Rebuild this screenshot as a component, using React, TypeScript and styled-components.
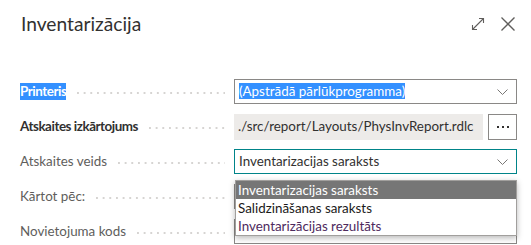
import styled, { createGlobalStyle } from 'styled-components';

const GlobalStyle = createGlobalStyle`
  html, body {
    margin: 0;
    padding: 0;
    background: #ffffff;
  }
  body {
    font-family: Lato, "Liberation Sans", sans-serif;
    color: #323130;
  }
`;

const Dialog = styled.div`
  width: 531px;
  height: 245px;
  padding: 12px 14px 0 20px;
  box-sizing: border-box;
  overflow: hidden;
`;

const Header = styled.div`
  display: flex;
  align-items: center;
  height: 24px;
  margin-bottom: 38px;
`;

const Title = styled.h1`
  flex: 1;
  margin: 0 0 0 1px;
  font-size: 19.2px;
  line-height: 24px;
  font-weight: 400;
  color: #323130;
`;

const HeaderActions = styled.div`
  display: flex;
  align-items: center;
  gap: 16px;
  margin-right: 2px;
`;

const IconButton = styled.span`
  display: flex;
  width: 14px;
  height: 14px;
  color: #605e5c;
`;

const Form = styled.div`
  display: flex;
  flex-direction: column;
`;

const Row = styled.div`
  display: grid;
  grid-template-columns: 205px 283px;
  column-gap: 9px;
  align-items: center;
  height: 35px;
`;

const LabelCell = styled.div`
  display: flex;
  align-items: center;
  min-width: 0;
`;

const Label = styled.span<{ $strong?: boolean; $selected?: boolean }>`
  font-size: 13.4px;
  line-height: 17px;
  white-space: nowrap;
  font-weight: ${p => (p.$strong ? 700 : 400)};
  letter-spacing: ${p => (p.$strong ? '-0.45px' : '0')};
  color: ${p => (p.$selected ? '#ffffff' : p.$strong ? '#323130' : '#605e5c')};
  background: ${p => (p.$selected ? '#3390ff' : 'transparent')};
`;

const Leader = styled.span`
  flex: 1;
  height: 2px;
  margin: 3px 0 0 11px;
  background-image: linear-gradient(to right, #d6d4d2 2px, transparent 2px);
  background-size: 6.67px 2px;
  background-repeat: repeat-x;
`;

const FieldWrap = styled.div`
  position: relative;
  display: flex;
  gap: 5px;
  align-items: center;
`;

const Input = styled.div<{ $focused?: boolean }>`
  flex: 1;
  display: flex;
  align-items: center;
  height: 25px;
  box-sizing: border-box;
  padding: 0 8px 0 4px;
  border: 1px solid ${p => (p.$focused ? '#008489' : '#8a8886')};
  background: #ffffff;
  font-size: 13.4px;
  color: #323130;
`;

const ReadOnlyInput = styled.div`
  flex: 1;
  display: flex;
  align-items: center;
  height: 26px;
  padding: 0 4px;
  background: #edebe9;
  font-size: 13.4px;
  color: #323130;
`;

const Value = styled.span<{ $selected?: boolean }>`
  flex: 1;
  line-height: 17px;
  white-space: nowrap;
  span {
    color: ${p => (p.$selected ? '#ffffff' : 'inherit')};
    background: ${p => (p.$selected ? '#3390ff' : 'transparent')};
  }
`;

const EllipsisButton = styled.div`
  width: 29px;
  height: 26px;
  box-sizing: border-box;
  border: 1px solid #8a8886;
  background: #ffffff;
  display: flex;
  align-items: center;
  justify-content: center;
  gap: 3px;
`;

const Dot = styled.span`
  width: 2px;
  height: 2px;
  background: #323130;
`;

const Listbox = styled.div`
  position: absolute;
  top: calc(100% + 6px);
  left: 1px;
  right: 0;
  z-index: 2;
  border: 1px solid #a19f9d;
  background: #ffffff;
  box-shadow: 0 2px 6px rgba(0, 0, 0, 0.28);
  font-size: 13.4px;
`;

const Option = styled.div<{ $active?: boolean; $tint?: string }>`
  height: 18px;
  line-height: 18px;
  padding-left: 2px;
  white-space: nowrap;
  background: ${p => (p.$active ? '#767676' : 'transparent')};
  color: ${p => (p.$active ? '#ffffff' : p.$tint || '#1b1a19')};
`;

const Chevron = () => (
  <svg width="11" height="6" viewBox="0 0 11 6" fill="none">
    <path d="M0.5 0.5 L5.5 5.5 L10.5 0.5" stroke="#797775" strokeWidth="1" />
  </svg>
);

const ExpandIcon = () => (
  <svg width="14" height="14" viewBox="0 0 14 14" fill="none" stroke="currentColor" strokeWidth="1.1">
    <path d="M1.5 12.5 L12.5 1.5" />
    <path d="M8 1.5 H12.5 V6" />
    <path d="M1.5 8 V12.5 H6" />
  </svg>
);

const CloseIcon = () => (
  <svg width="14" height="14" viewBox="0 0 14 14" fill="none" stroke="currentColor" strokeWidth="1.3">
    <path d="M0.5 0.5 L13.5 13.5" />
    <path d="M13.5 0.5 L0.5 13.5" />
  </svg>
);

const options = [
  { text: 'Inventarizacijas saraksts', active: true },
  { text: 'Salidzināšanas saraksts' },
  { text: 'Inventarizācijas rezultāts', tint: '#4e2a5e' },
];

export default function App() {
  return (
    <>
      <GlobalStyle />
      <Dialog>
        <Header>
          <Title>Inventarizācija</Title>
          <HeaderActions>
            <IconButton><ExpandIcon /></IconButton>
            <IconButton><CloseIcon /></IconButton>
          </HeaderActions>
        </Header>
        <Form>
          <Row>
            <LabelCell>
              <Label $strong $selected>Printeris</Label>
              <Leader />
            </LabelCell>
            <FieldWrap>
              <Input>
                <Value $selected><span>(Apstrādā pārlūkprogramma)</span></Value>
                <Chevron />
              </Input>
            </FieldWrap>
          </Row>
          <Row>
            <LabelCell>
              <Label $strong>Atskaites izkārtojums</Label>
              <Leader />
            </LabelCell>
            <FieldWrap>
              <ReadOnlyInput>
                <Value>./src/report/Layouts/PhysInvReport.rdlc</Value>
              </ReadOnlyInput>
              <EllipsisButton>
                <Dot />
                <Dot />
                <Dot />
              </EllipsisButton>
            </FieldWrap>
          </Row>
          <Row>
            <LabelCell>
              <Label>Atskaites veids</Label>
              <Leader />
            </LabelCell>
            <FieldWrap>
              <Input $focused>
                <Value>Inventarizacijas saraksts</Value>
                <Chevron />
              </Input>
              <Listbox>
                {options.map(o => (
                  <Option key={o.text} $active={o.active} $tint={o.tint}>
                    {o.text}
                  </Option>
                ))}
              </Listbox>
            </FieldWrap>
          </Row>
          <Row>
            <LabelCell>
              <Label>Kārtot pēc:</Label>
              <Leader />
            </LabelCell>
            <FieldWrap>
              <Input />
            </FieldWrap>
          </Row>
          <Row>
            <LabelCell>
              <Label>Novietojuma kods</Label>
              <Leader />
            </LabelCell>
            <FieldWrap>
              <Input />
            </FieldWrap>
          </Row>
        </Form>
      </Dialog>
    </>
  );
}
